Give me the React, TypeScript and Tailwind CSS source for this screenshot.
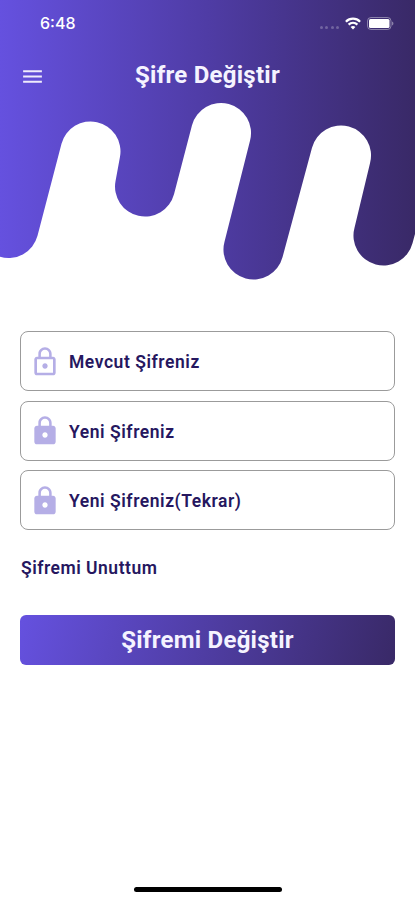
import React from 'react';
import { MdLock, MdLockOutline, MdMenu } from 'react-icons/md';

interface PasswordFieldProps {
  label: string;
  outline?: boolean;
}

const PasswordField: React.FC<PasswordFieldProps> = ({ label, outline = false }) => {
  const Icon = outline ? MdLockOutline : MdLock;

  return (
    <label className="flex h-[60px] items-center rounded-lg border border-[#9b9b9b] bg-white pl-[7.5px]">
      <Icon className="mt-px h-8 w-8 text-[#b5aee6]" />
      <span className="ml-[8.5px] pt-[2.5px] text-[17.5px] font-semibold tracking-[0.55px] text-[#26175f]">{label}</span>
    </label>
  );
};

// Dripping gradient behind the header
const HeaderWave = () => (
  <svg className="absolute inset-0" width="415" height="282" viewBox="0 0 415 282" fill="none">
    <defs>
      <linearGradient id="wave" x1="0" y1="0" x2="415" y2="0" gradientUnits="userSpaceOnUse">
        <stop offset="0" stopColor="#6551df" />
        <stop offset="0.5" stopColor="#4f3ca5" />
        <stop offset="1" stopColor="#392967" />
      </linearGradient>
    </defs>
    <path
      d="M0 0H415V234L412.5 243.3A30 30 0 0 1 354.5 227.7L370 163.3A30 30 0 0 0 312 147.7L282.5 257.3A30 30 0 0 1 224.5 241.7L250 140.8A30 30 0 0 0 192 125.2L174 194.3A30 30 0 0 1 115.5 181.2L120 156.8A30 30 0 0 0 61.5 143.7L37.5 235.8A30 30 0 0 1 0 256.8Z"
      fill="url(#wave)"
    />
  </svg>
);

const StatusBar = () => (
  <div className="flex h-[46px] items-center justify-between pl-10 pr-[21px]">
    <span className="font-['Inter'] text-[16px] font-medium">6:48</span>
    <div className="flex items-center">
      <div className="mr-[6px] mt-2 flex gap-[2.5px]">
        <span className="h-[3px] w-[3px] rounded-full bg-white/25" />
        <span className="h-[3px] w-[3px] rounded-full bg-white/25" />
        <span className="h-[3px] w-[3px] rounded-full bg-white/25" />
        <span className="h-[3px] w-[3px] rounded-full bg-white/25" />
      </div>
      <svg width="16" height="13" viewBox="0 0 16 13" fill="none" stroke="white" strokeWidth="2.2">
        <path d="M0.9 4.7C4.9 0.7 11.1 0.7 15.1 4.7" />
        <path d="M3.6 7.6C6.1 5.1 9.9 5.1 12.4 7.6" />
        <path d="M8 12.4L5.6 10C7 8.7 9 8.7 10.4 10Z" fill="white" stroke="none" />
      </svg>
      <svg className="ml-[6px]" width="27" height="13" viewBox="0 0 27 13" fill="none">
        <rect x="0.5" y="0.5" width="23.5" height="12" rx="3.5" stroke="white" strokeOpacity="0.4" />
        <rect x="2" y="2" width="20.5" height="9" rx="1.5" fill="white" />
        <path d="M25.2 4.5C26.8 5 26.8 8 25.2 8.5Z" fill="white" fillOpacity="0.5" />
      </svg>
    </div>
  </div>
);

const App: React.FC = () => {
  return (
    <div className="flex h-[900px] w-[415px] flex-col overflow-hidden bg-white font-['Roboto',sans-serif]">
      <header className="relative h-[282px] text-white">
        <HeaderWave />
        <div className="relative">
          <StatusBar />
          <div className="grid h-[58px] grid-cols-[1fr_auto_1fr] items-center px-5">
            <button type="button" className="mt-0.5 w-fit" aria-label="Menu">
              <MdMenu className="h-[25px] w-[25px] text-[#efecfc]" />
            </button>
            <h1 className="text-[24px] font-bold tracking-[0.25px] text-[#f5f3ff]">Şifre Değiştir</h1>
          </div>
        </div>
      </header>

      <main className="mt-[49px] flex flex-1 flex-col px-5">
        <form className="flex flex-col gap-[9.5px]">
          <PasswordField label="Mevcut Şifreniz" outline />
          <PasswordField label="Yeni Şifreniz" />
          <PasswordField label="Yeni Şifreniz(Tekrar)" />
        </form>
        <a href="#" className="mt-[26px] ml-px w-fit text-[17.5px] leading-6 font-semibold tracking-[0.5px] text-[#26175f]">
          Şifremi Unuttum
        </a>
        <button
          type="button"
          className="mt-[35px] h-[50px] rounded-md bg-linear-[105deg] from-[#6551df] to-[#392967] text-[24px] font-bold tracking-[0.25px] text-[#f5f3ff]"
        >
          Şifremi Değiştir
        </button>
      </main>

      <div className="mb-2 h-[5px] w-[148px] self-center rounded-full bg-black" />
    </div>
  );
};

export default App;
